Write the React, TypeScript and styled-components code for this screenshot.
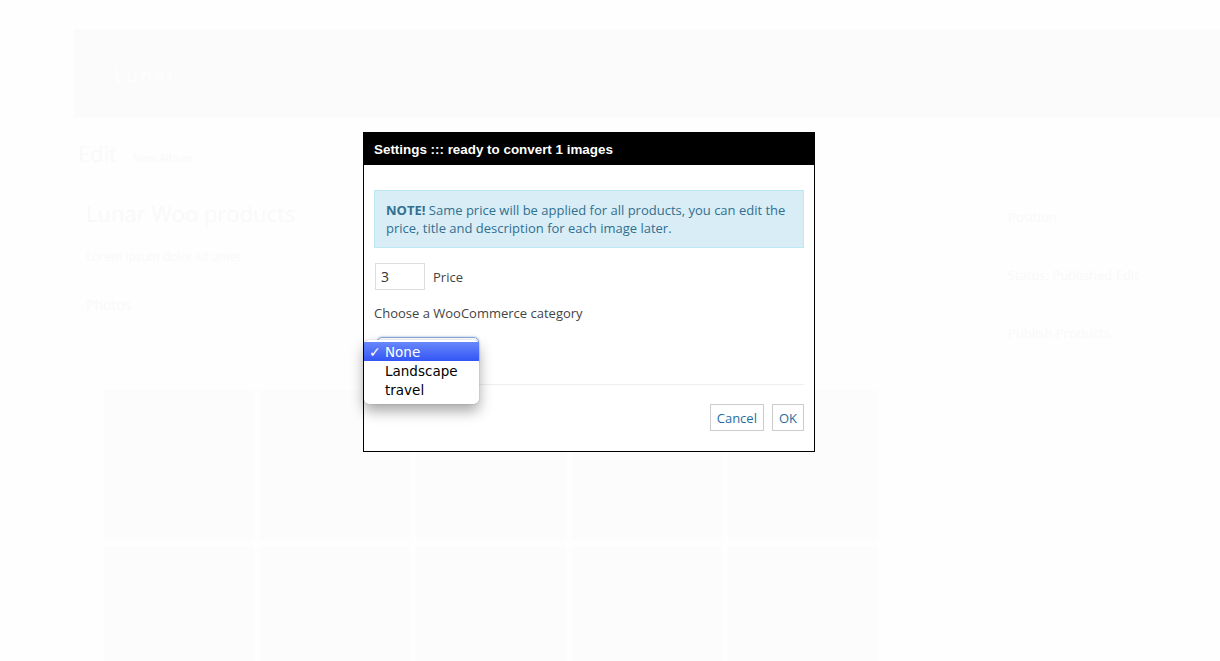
import React from "react";
import styled, { createGlobalStyle } from "styled-components";

const Global = createGlobalStyle`
  html, body { margin: 0; padding: 0; }
  body {
    background: #fefefe;
    font-family: "Open Sans", "Liberation Sans", sans-serif;
    width: 1220px;
    height: 661px;
    overflow: hidden;
  }
`;

const Page = styled.div`
  position: relative;
  width: 1220px;
  height: 661px;
  overflow: hidden;
  padding-top: 29px;
  box-sizing: border-box;
`;

const HeaderBand = styled.div`
  margin-left: 74px;
  height: 89px;
  background: #fbfbfb;
  display: flex;
  align-items: center;
  padding-left: 40px;
  color: #fefefe;
  font-size: 20px;
  font-family: "Lato", sans-serif;
  letter-spacing: 3px;
`;

const Main = styled.div`
  display: flex;
  padding: 20px 0 0 78px;
`;

const LeftCol = styled.div`
  width: 640px;
  display: flex;
  flex-direction: column;
  color: #f9f9f9;
`;

const PageTitle = styled.div`
  font-size: 22px;
  display: flex;
  align-items: baseline;
  gap: 16px;
  span { font-size: 11px; }
`;

const AlbumTitle = styled.div`
  margin: 30px 0 0 8px;
  font-size: 22px;
`;

const AlbumDesc = styled.div`
  margin: 20px 0 0 8px;
  font-size: 12px;
`;

const Photos = styled.div`
  margin: 30px 0 0 8px;
  font-size: 14px;
`;

const Grid = styled.div`
  margin: 76px 0 0 26px;
  display: grid;
  grid-template-columns: repeat(5, 150px);
  grid-auto-rows: 150px;
  gap: 6px;
`;

const Thumb = styled.div`
  background: #fcfcfc;
`;

const RightCol = styled.div`
  margin-left: 290px;
  padding-top: 70px;
  display: flex;
  flex-direction: column;
  gap: 40px;
  color: #f9f9f9;
  font-size: 13px;
`;

const BgButtons = styled.div`
  display: flex;
  gap: 10px;
  margin-left: -280px;
  margin-top: -10px;
`;

const BgButton = styled.div<{ $w: number }>`
  width: ${(p) => p.$w}px;
  height: 33px;
  background: #fbfbfb;
`;

const Dialog = styled.div`
  position: absolute;
  left: 363px;
  top: 132px;
  width: 452px;
  height: 320px;
  box-sizing: border-box;
  border: 1px solid #000;
  background: #fff;
  display: flex;
  flex-direction: column;
`;

const DialogHeader = styled.div`
  background: #000;
  height: 32px;
  display: flex;
  align-items: center;
  padding: 0 10px;
  color: #fff;
  font-family: "Liberation Sans", Arial, sans-serif;
  font-weight: bold;
  font-size: 13.4px;
`;

const DialogBody = styled.div`
  padding: 25px 10px 0 10px;
  display: flex;
  flex-direction: column;
  font-size: 13px;
  color: #444;
`;

const Note = styled.p`
  margin: 0;
  background: #d9edf7;
  border: 1px solid #bce8f1;
  color: #31708f;
  padding: 10px 11px;
  line-height: 18px;
  font-size: 13px;
`;

const NoteStrong = styled.strong`
  font-weight: 700;
`;

const PriceRow = styled.div`
  margin-top: 15px;
  display: flex;
  align-items: center;
  gap: 8px;
  padding-left: 1px;
`;

const PriceInput = styled.div`
  width: 50px;
  height: 27px;
  box-sizing: border-box;
  border: 1px solid #ddd;
  padding: 0 5px;
  display: flex;
  align-items: center;
  font-size: 14px;
  color: #333;
`;

const Label = styled.div`
  margin-top: 14px;
  line-height: 18px;
`;

const SelectWrap = styled.div`
  position: relative;
  margin-top: 15px;
  height: 28px;
`;

const SelectBox = styled.div`
  margin-left: 3px;
  width: 100px;
  height: 26px;
  border: 1px solid #8aa8d8;
  border-radius: 5px;
  box-shadow: 0 0 2px #7aa7e8;
`;

const Menu = styled.div`
  position: absolute;
  left: -10px;
  top: 3px;
  width: 115px;
  box-sizing: border-box;
  padding: 2px 0 5px;
  background: #fff;
  border-radius: 5px;
  box-shadow: 0 7px 14px rgba(0, 0, 0, 0.35), 0 0 1px rgba(0, 0, 0, 0.4);
  font-family: "DejaVu Sans", sans-serif;
  font-size: 13.5px;
  color: #000;
  z-index: 2;
`;

const MenuItem = styled.div<{ $active?: boolean }>`
  height: 19px;
  display: flex;
  align-items: center;
  padding-left: 21px;
  position: relative;
  ${(p) =>
    p.$active &&
    `
    background: linear-gradient(#6888fc, #3355f4);
    color: #fff;
  `}
`;

const Check = styled.span`
  position: absolute;
  left: 5px;
  font-size: 14px;
  font-weight: bold;
`;

const Separator = styled.div`
  margin-top: 19px;
  height: 1px;
  background: #eee;
`;

const Footer = styled.div`
  margin-top: 19px;
  display: flex;
  justify-content: flex-end;
  gap: 8px;
`;

const Button = styled.div`
  height: 27px;
  box-sizing: border-box;
  border: 1px solid #ccc;
  padding: 0 6px;
  display: flex;
  align-items: center;
  color: #1e6ea3;
  font-size: 13px;
  background: #fff;
`;

export default function App() {
  return (
    <>
      <Global />
      <Page>
        <HeaderBand>Lunar</HeaderBand>
        <Main>
          <LeftCol>
            <PageTitle>
              Edit <span>New Album</span>
            </PageTitle>
            <AlbumTitle>Lunar Woo products</AlbumTitle>
            <AlbumDesc>Lorem ipsum dolor sit amet</AlbumDesc>
            <Photos>Photos</Photos>
            <Grid>
              {Array.from({ length: 10 }).map((_, i) => (
                <Thumb key={i} />
              ))}
            </Grid>
          </LeftCol>
          <RightCol>
            <div>Position</div>
            <div>Status: Published Edit</div>
            <div>Publish Products</div>
          </RightCol>
        </Main>

        <Dialog>
          <DialogHeader>Settings ::: ready to convert 1 images</DialogHeader>
          <DialogBody>
            <Note>
              <NoteStrong>NOTE!</NoteStrong> Same price will be applied for all products, you can
              edit the price, title and description for each image later.
            </Note>
            <PriceRow>
              <PriceInput>3</PriceInput>
              <span>Price</span>
            </PriceRow>
            <Label>Choose a WooCommerce category</Label>
            <SelectWrap>
              <SelectBox />
              <Menu>
                <MenuItem $active>
                  <Check>✓</Check>None
                </MenuItem>
                <MenuItem>Landscape</MenuItem>
                <MenuItem>travel</MenuItem>
              </Menu>
            </SelectWrap>
            <Separator />
            <Footer>
              <Button>Cancel</Button>
              <Button>OK</Button>
            </Footer>
          </DialogBody>
        </Dialog>
      </Page>
    </>
  );
}
